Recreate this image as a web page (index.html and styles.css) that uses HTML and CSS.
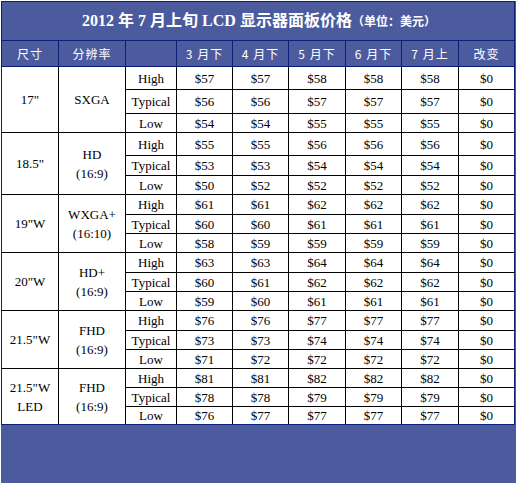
FILE: index.html
```html
<!DOCTYPE html>
<html lang="zh">
<head>
<meta charset="utf-8">
<title>2012 年 7 月上旬 LCD 显示器面板价格</title>
<link rel="stylesheet" href="styles.css">
</head>
<body>
<div class="wrap">
  <div class="title">2012 年 7 月上旬 LCD 显示器面板价格<span class="unit">（单位：美元）</span></div>
  <table class="prices">
    <colgroup>
      <col style="width:57px"><col style="width:67px"><col style="width:51px"><col style="width:56px"><col style="width:56px"><col style="width:57px"><col style="width:56px"><col style="width:57px"><col style="width:56px">
    </colgroup>
    <thead>
      <tr class="head">
        <th class="first">尺寸</th><th>分辨率</th><th></th><th>3 月下</th><th>4 月下</th><th>5 月下</th><th>6 月下</th><th>7 月上</th><th class="last">改变</th>
      </tr>
    </thead>
    <tbody>
      <tr class="h23"><td class="first" rowspan="3">17"</td><td rowspan="3">SXGA</td><td>High</td><td>$57</td><td>$57</td><td>$58</td><td>$58</td><td>$58</td><td class="last">$0</td></tr>
      <tr class="h24"><td>Typical</td><td>$56</td><td>$56</td><td>$57</td><td>$57</td><td>$57</td><td class="last">$0</td></tr>
      <tr class="h19"><td>Low</td><td>$54</td><td>$54</td><td>$55</td><td>$55</td><td>$55</td><td class="last">$0</td></tr>

      <tr class="h23"><td class="first" rowspan="3">18.5"</td><td class="multi" rowspan="3">HD<br>(16:9)</td><td>High</td><td>$55</td><td>$55</td><td>$56</td><td>$56</td><td>$56</td><td class="last">$0</td></tr>
      <tr class="h20"><td>Typical</td><td>$53</td><td>$53</td><td>$54</td><td>$54</td><td>$54</td><td class="last">$0</td></tr>
      <tr class="h19"><td>Low</td><td>$50</td><td>$52</td><td>$52</td><td>$52</td><td>$52</td><td class="last">$0</td></tr>

      <tr class="h20"><td class="first" rowspan="3">19"W</td><td class="multi" rowspan="3">WXGA+<br>(16:10)</td><td>High</td><td>$61</td><td>$61</td><td>$62</td><td>$62</td><td>$62</td><td class="last">$0</td></tr>
      <tr class="h19"><td>Typical</td><td>$60</td><td>$60</td><td>$61</td><td>$61</td><td>$61</td><td class="last">$0</td></tr>
      <tr class="h19"><td>Low</td><td>$58</td><td>$59</td><td>$59</td><td>$59</td><td>$59</td><td class="last">$0</td></tr>

      <tr class="h20"><td class="first" rowspan="3">20"W</td><td class="multi" rowspan="3">HD+<br>(16:9)</td><td>High</td><td>$63</td><td>$63</td><td>$64</td><td>$64</td><td>$64</td><td class="last">$0</td></tr>
      <tr class="h19"><td>Typical</td><td>$60</td><td>$61</td><td>$62</td><td>$62</td><td>$62</td><td class="last">$0</td></tr>
      <tr class="h19"><td>Low</td><td>$59</td><td>$60</td><td>$61</td><td>$61</td><td>$61</td><td class="last">$0</td></tr>

      <tr class="h20"><td class="first" rowspan="3">21.5"W</td><td class="multi" rowspan="3">FHD<br>(16:9)</td><td>High</td><td>$76</td><td>$76</td><td>$77</td><td>$77</td><td>$77</td><td class="last">$0</td></tr>
      <tr class="h19"><td>Typical</td><td>$73</td><td>$73</td><td>$74</td><td>$74</td><td>$74</td><td class="last">$0</td></tr>
      <tr class="h19"><td>Low</td><td>$71</td><td>$72</td><td>$72</td><td>$72</td><td>$72</td><td class="last">$0</td></tr>

      <tr class="h19"><td class="first endrow multi" rowspan="3">21.5"W<br>LED</td><td class="endrow multi" rowspan="3">FHD<br>(16:9)</td><td>High</td><td>$81</td><td>$81</td><td>$82</td><td>$82</td><td>$82</td><td class="last">$0</td></tr>
      <tr class="h19"><td>Typical</td><td>$78</td><td>$78</td><td>$79</td><td>$79</td><td>$79</td><td class="last">$0</td></tr>
      <tr class="h18 end"><td>Low</td><td>$76</td><td>$77</td><td>$77</td><td>$77</td><td>$77</td><td class="last">$0</td></tr>
    </tbody>
  </table>
</div>
</body>
</html>
```
FILE: styles.css
```css
html, body {
  margin: 0;
  padding: 0;
  background: #ffffff;
}

.wrap {
  margin: 1px 0 0 1px;
  width: 515px;
  height: 482px;
  background: #4b5b9e;
  box-sizing: border-box;
}

.title {
  height: 39px;
  box-sizing: border-box;
  border: 1px solid #0c1f78;
  border-bottom: none;
  width: 514px;
  color: #ffffff;
  font-family: "Liberation Serif", "Noto Sans CJK SC", serif;
  font-weight: bold;
  font-size: 16px;
  line-height: 38px;
  text-align: center;
  padding-left: 2px;
  white-space: nowrap;
}

.unit {
  font-size: 12px;
}

.prices {
  border-collapse: collapse;
  table-layout: fixed;
  width: 514px;
}

.prices th,
.prices td {
  padding: 0;
  text-align: center;
  vertical-align: middle;
  overflow: hidden;
  white-space: nowrap;
}

.prices th {
  height: 25px;
  background: #4b5b9e;
  color: #ffffff;
  border: 1px solid #0c1f78;
  font-family: "Noto Sans CJK SC", "DejaVu Sans", sans-serif;
  font-weight: normal;
  font-size: 12px;
  line-height: 16px;
  letter-spacing: 1px;
}

.prices td {
  background: #ffffff;
  color: #000000;
  border: 1px solid #000000;
  font-family: "Liberation Serif", serif;
  font-size: 13px;
  line-height: 15px;
}

.prices td.multi {
  line-height: 19px;
}

.prices td.first {
  border-left: 1px solid #0c1f78;
}

.prices td.last {
  border-right: 1px solid #0c1f78;
}

.prices tr.end td,
.prices td.endrow {
  border-bottom: 1px solid #0c1f78;
}

.h24 { height: 24px; }
.h23 { height: 23px; }
.h20 { height: 20px; }
.h19 { height: 19px; }
.h18 { height: 18px; }
```
